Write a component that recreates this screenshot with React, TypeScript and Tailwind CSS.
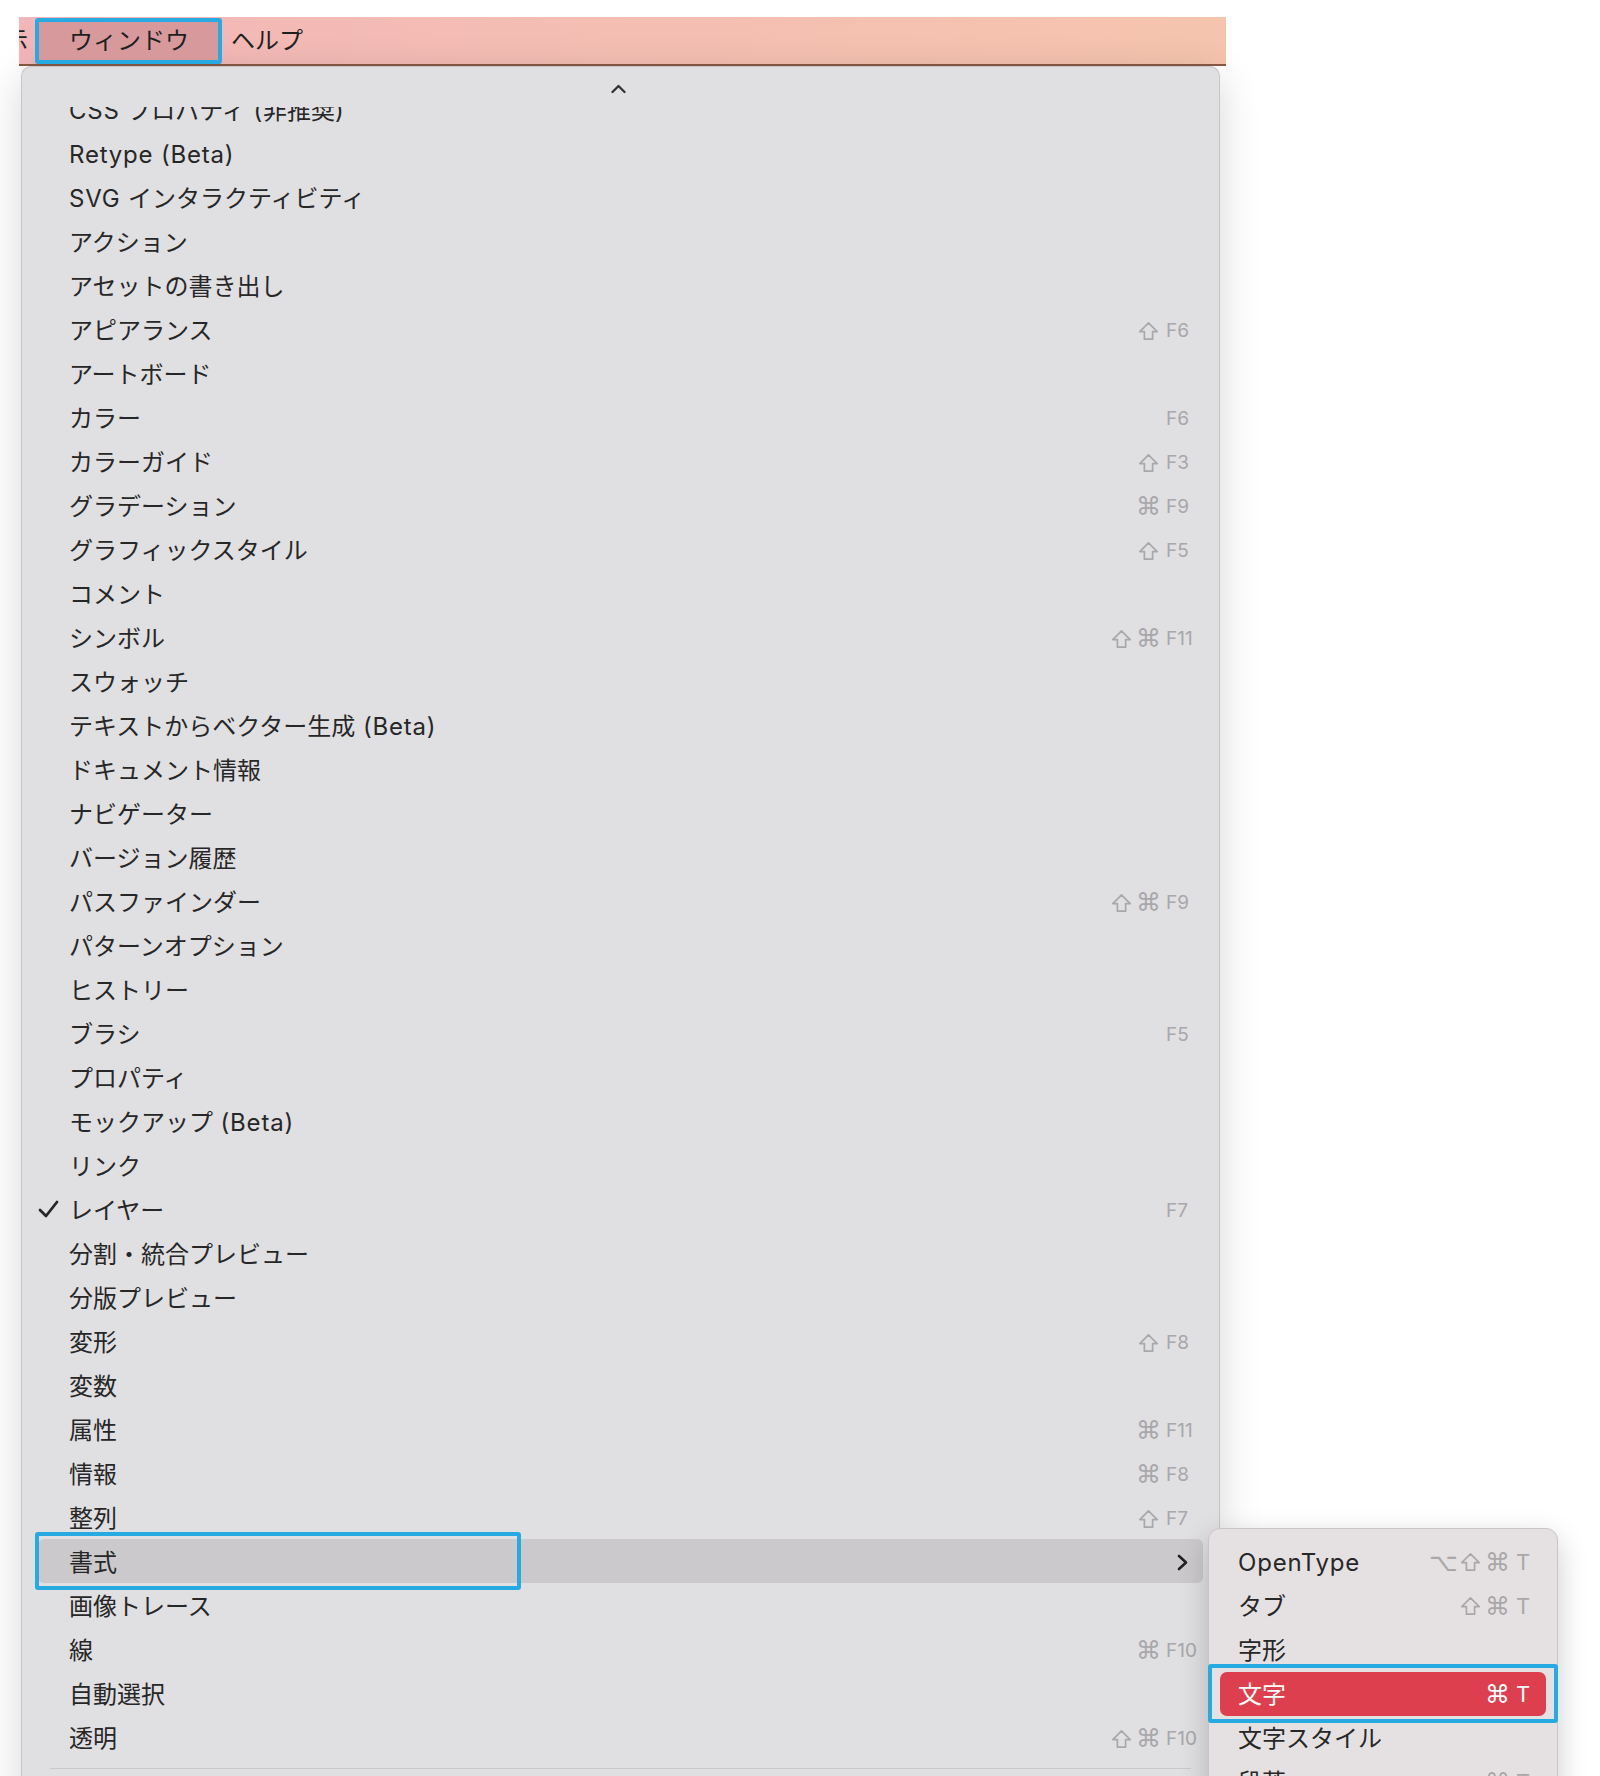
import React from "react";

type Item = {
  label: string;
  mods?: string[];
  keyName?: string;
  checked?: boolean;
  submenu?: boolean;
};

const items: Item[] = [
  { label: "CSS プロパティ (非推奨)" },
  { label: "Retype (Beta)" },
  { label: "SVG インタラクティビティ" },
  { label: "アクション" },
  { label: "アセットの書き出し" },
  { label: "アピアランス", mods: ["⇧"], keyName: "F6" },
  { label: "アートボード" },
  { label: "カラー", keyName: "F6" },
  { label: "カラーガイド", mods: ["⇧"], keyName: "F3" },
  { label: "グラデーション", mods: ["⌘"], keyName: "F9" },
  { label: "グラフィックスタイル", mods: ["⇧"], keyName: "F5" },
  { label: "コメント" },
  { label: "シンボル", mods: ["⇧", "⌘"], keyName: "F11" },
  { label: "スウォッチ" },
  { label: "テキストからベクター生成 (Beta)" },
  { label: "ドキュメント情報" },
  { label: "ナビゲーター" },
  { label: "バージョン履歴" },
  { label: "パスファインダー", mods: ["⇧", "⌘"], keyName: "F9" },
  { label: "パターンオプション" },
  { label: "ヒストリー" },
  { label: "ブラシ", keyName: "F5" },
  { label: "プロパティ" },
  { label: "モックアップ (Beta)" },
  { label: "リンク" },
  { label: "レイヤー", keyName: "F7", checked: true },
  { label: "分割・統合プレビュー" },
  { label: "分版プレビュー" },
  { label: "変形", mods: ["⇧"], keyName: "F8" },
  { label: "変数" },
  { label: "属性", mods: ["⌘"], keyName: "F11" },
  { label: "情報", mods: ["⌘"], keyName: "F8" },
  { label: "整列", mods: ["⇧"], keyName: "F7" },
  { label: "書式", submenu: true },
  { label: "画像トレース" },
  { label: "線", mods: ["⌘"], keyName: "F10" },
  { label: "自動選択" },
  { label: "透明", mods: ["⇧", "⌘"], keyName: "F10" },
];

const subItems: Item[] = [
  { label: "OpenType", mods: ["⌥", "⇧", "⌘"], keyName: "T" },
  { label: "タブ", mods: ["⇧", "⌘"], keyName: "T" },
  { label: "字形" },
  { label: "文字", mods: ["⌘"], keyName: "T" },
  { label: "文字スタイル" },
  { label: "段落", mods: ["⌥", "⌘"], keyName: "T" },
];

// latin runs get a bit of tracking so they sit closer to the system font width
function Label({ text }: { text: string }) {
  const parts = text.split(/([A-Za-z() ]+)/).filter(Boolean);
  return (
    <>
      {parts.map((p, i) =>
        /^[A-Za-z() ]+$/.test(p) ? (
          <span key={i} className="tracking-[0.8px]">
            {p}
          </span>
        ) : (
          <span key={i}>{p}</span>
        )
      )}
    </>
  );
}

function ShiftIcon() {
  return (
    <svg width="21" height="20" viewBox="0 0 21 20" fill="none">
      <path
        d="M10.5 1.8 L19.2 10.6 H14.6 V18.2 H6.4 V10.6 H1.8 Z"
        stroke="currentColor"
        strokeWidth="1.7"
        strokeLinejoin="round"
      />
    </svg>
  );
}

function Mods({ mods }: { mods?: string[] }) {
  if (!mods) return null;
  return (
    <div className="flex items-center gap-[6px] font-['DejaVu_Sans',sans-serif] text-[25px] leading-none">
      {mods.map((m, i) => (
        <span key={i} className="flex w-[21px] items-center justify-center">
          {m === "⇧" ? <ShiftIcon /> : m}
        </span>
      ))}
    </div>
  );
}

function MenuRow({ item, active }: { item: Item; active?: boolean }) {
  return (
    <div
      className={
        "mx-[16px] flex h-[44px] items-center rounded-[6px] " +
        (active ? "bg-[#cbc9cc]" : "")
      }
    >
      <div className="flex w-[31px] shrink-0 items-center">
        {item.checked && (
          <svg width="21" height="20" viewBox="0 0 21 20" fill="none">
            <path
              d="M2 11 L8 17 L19 3"
              stroke="#262626"
              strokeWidth="2.8"
              strokeLinecap="round"
              strokeLinejoin="round"
            />
          </svg>
        )}
      </div>
      <div className="mt-[4px] flex-1 whitespace-nowrap text-[24px] leading-none text-[#272727]">
        <Label text={item.label} />
      </div>
      <div className="mt-[3px] flex items-center text-[#a8a7aa]">
        <Mods mods={item.mods} />
        <div className="ml-[7px] w-[37px] text-[19px] leading-none">
          {item.submenu ? (
            <svg className="ml-[11px]" width="12" height="17" viewBox="0 0 12 17" fill="none">
              <path
                d="M2 2 L9 8.5 L2 15"
                stroke="#222"
                strokeWidth="2.6"
                strokeLinecap="round"
                strokeLinejoin="round"
              />
            </svg>
          ) : (
            item.keyName
          )}
        </div>
      </div>
    </div>
  );
}

function SubRow({ item, active }: { item: Item; active?: boolean }) {
  return (
    <div
      className={
        "mx-[11px] flex h-[44px] items-center rounded-[7px] pl-[18px] " +
        (active ? "bg-[#de3f4e] text-white" : "text-[#272727]")
      }
    >
      <div className="mt-[1px] flex-1 whitespace-nowrap text-[24px] leading-none">
        <Label text={item.label} />
      </div>
      <div className={"flex items-center " + (active ? "text-white" : "text-[#aaa7a9]")}>
        <Mods mods={item.mods} />
        <div className="ml-[8px] w-[30px] text-[22px] leading-none">{item.keyName}</div>
      </div>
    </div>
  );
}

export default function App() {
  return (
    <div className="relative h-[1776px] w-[1600px] overflow-hidden bg-white font-['Inter','Noto_Sans_CJK_JP',sans-serif]">
      {/* menu bar */}
      <div className="ml-[19px] mt-[17px] flex h-[49px] w-[1207px] items-center overflow-hidden border-b-2 border-[#8a5845] bg-[linear-gradient(90deg,#f2b6b8_0%,#f4bdb4_40%,#f5c4ad_100%)] text-[24px] leading-none text-[#1f1f1f]">
        <span className="-ml-[15px]">示</span>
        <div className="ml-[7px] flex h-[46px] w-[187px] items-center rounded-[3px] border-4 border-[#27a9e1] bg-[#d8999d] pl-[30px]">
          ウィンドウ
        </div>
        <span className="ml-[9px]">ヘルプ</span>
      </div>

      {/* main menu */}
      <div className="ml-[21px] w-[1199px] overflow-hidden rounded-t-[10px] border border-b-0 border-[#c6c5c8] bg-[#e0dfe2] shadow-[0_10px_40px_rgba(0,0,0,0.16)]">
        <div className="flex h-[40px] items-center justify-center pr-[4px] pt-[4px]">
          <svg width="15" height="10" viewBox="0 0 15 10" fill="none">
            <path
              d="M1.5 8 L7.5 2 L13.5 8"
              stroke="#333"
              strokeWidth="2.3"
              strokeLinecap="round"
              strokeLinejoin="round"
            />
          </svg>
        </div>
        <div className="h-[1700px] overflow-hidden">
          <div className="-mt-[20px]">
            {items.map((it, i) => (
              <MenuRow key={i} item={it} active={it.submenu} />
            ))}
            <div className="mx-[28px] my-[9px] h-px bg-[#c9c8cb]" />
            <MenuRow item={{ label: "ワークスペース" }} />
          </div>
        </div>
      </div>

      {/* submenu */}
      <div className="absolute left-[1208px] top-[1528px] w-[350px] rounded-[12px] border border-[#c9c5c7] bg-[#e5e1e3] py-[11px] shadow-[0_10px_30px_rgba(0,0,0,0.2)]">
        {subItems.map((it, i) => (
          <SubRow key={i} item={it} active={i === 3} />
        ))}
      </div>

      {/* annotation outlines */}
      <div className="absolute left-[35px] top-[1532px] h-[58px] w-[486px] rounded-[3px] border-4 border-[#27a9e1]" />
      <div className="absolute left-[1208px] top-[1664px] h-[59px] w-[350px] rounded-[3px] border-4 border-[#27a9e1]" />
    </div>
  );
}
